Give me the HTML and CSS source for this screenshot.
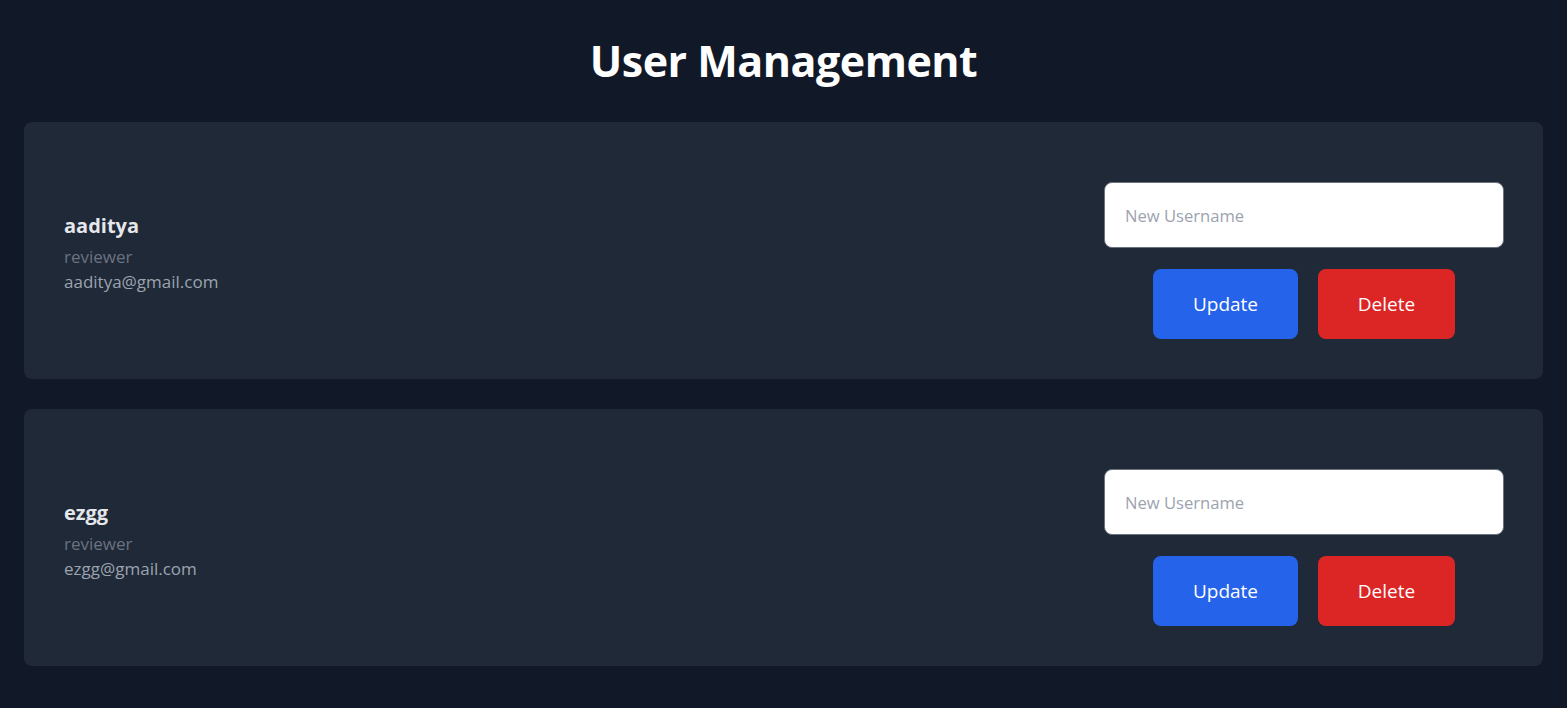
FILE: index.html
```html
<!DOCTYPE html>
<html lang="en">
<head>
<meta charset="utf-8">
<title>User Management</title>
<link rel="stylesheet" href="styles.css">
</head>
<body>
<main class="page">
  <h1 class="title">User Management</h1>
  <div class="list">
    <section class="card">
      <div class="info">
        <div class="name">aaditya</div>
        <div class="role">reviewer</div>
        <div class="email">aaditya@gmail.com</div>
      </div>
      <div class="actions">
        <input class="field" type="text" placeholder="New Username">
        <div class="buttons">
          <button class="btn btn-update">Update</button>
          <button class="btn btn-delete">Delete</button>
        </div>
      </div>
    </section>
    <section class="card">
      <div class="info">
        <div class="name">ezgg</div>
        <div class="role">reviewer</div>
        <div class="email">ezgg@gmail.com</div>
      </div>
      <div class="actions">
        <input class="field" type="text" placeholder="New Username">
        <div class="buttons">
          <button class="btn btn-update">Update</button>
          <button class="btn btn-delete">Delete</button>
        </div>
      </div>
    </section>
  </div>
</main>
</body>
</html>
```
FILE: styles.css
```css
* { box-sizing: border-box; }
html, body { margin: 0; background: #111827; }
body {
  font-family: "Open Sans", "Noto Sans", sans-serif;
  color: #fff;
  min-height: 708px;
}
.page { padding: 24px 24px; }
.title {
  margin: 0 0 24px;
  text-align: center;
  font-size: 43px;
  line-height: 74px;
  font-weight: 700;
  color: #fff;
  letter-spacing: -0.5px;
}
.list { display: flex; flex-direction: column; gap: 30px; }
.card {
  background: #1f2937;
  border-radius: 8px;
  height: 257px;
  padding: 40px 39px 40px 40px;
  display: flex;
  align-items: center;
  justify-content: space-between;
}
.info { display: flex; flex-direction: column; }
.name { font-size: 20px; font-weight: 700; color: #e5e7eb; line-height: 37px; }
.role { font-size: 17px; color: #6b7280; line-height: 25px; }
.email { font-size: 17px; color: #9ca3af; line-height: 25px; }
.actions {
  width: 400px;
  padding-top: 20px;
  display: flex;
  flex-direction: column;
  align-items: center;
  gap: 21px;
}
.field {
  width: 100%;
  height: 66px;
  border: 1px solid #6b7280;
  border-radius: 8px;
  background: #fff;
  padding: 0 20px;
  font-family: inherit;
  font-size: 16.6px;
  color: #111827;
  outline: none;
}
.field::placeholder { color: #9ca3af; }
.buttons { display: flex; gap: 20px; }
.btn {
  height: 70px;
  border: 0;
  border-radius: 8px;
  font-family: inherit;
  font-size: 19px;
  color: #fff;
  cursor: pointer;
}
.btn-update { background: #2563eb; width: 145px; }
.btn-delete { background: #dc2626; width: 137px; }
```
